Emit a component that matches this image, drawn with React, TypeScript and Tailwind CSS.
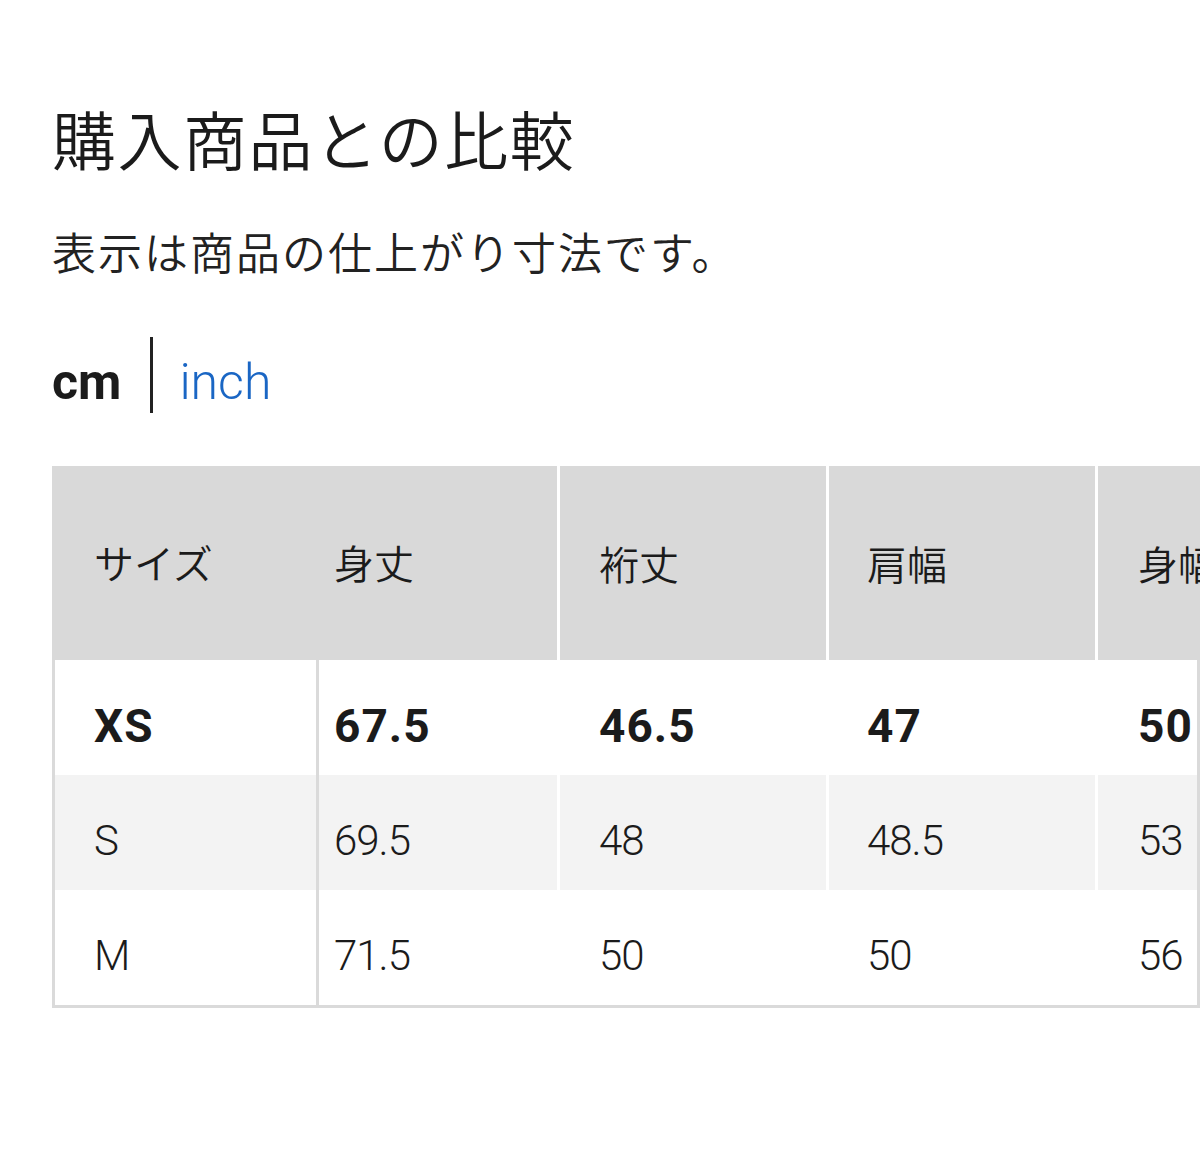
import React from "react";

const jp = { fontFamily: '"Noto Sans CJK JP", "Noto Sans", sans-serif' };
const num = { fontFamily: 'Roboto, "Noto Sans CJK JP", sans-serif' };

type Row = { size: string; vals: string[]; bold?: boolean; shaded?: boolean };

const rows: Row[] = [
  { size: "XS", vals: ["67.5", "46.5", "47", "50"], bold: true },
  { size: "S", vals: ["69.5", "48", "48.5", "53"], shaded: true },
  { size: "M", vals: ["71.5", "50", "50", "56"] },
];

function DataRow({ r }: { r: Row }) {
  const bg = r.shaded ? "bg-[#f3f3f3]" : "bg-white";
  const txt = r.bold
    ? "text-[46px] font-bold tracking-[1px]"
    : "text-[42px] font-light tracking-[-1px]";
  return (
    <div className="flex h-[115px] gap-[3px] bg-white">
      <div className={`flex w-[264px] shrink-0 items-center border-r-[3px] border-[#dadada] pl-[39px] pt-[16px] ${bg}`}>
        <span className={`leading-none text-[#1b1b1b] ${txt}`} style={num}>{r.size}</span>
      </div>
      <div className={`-ml-[3px] flex w-[238px] shrink-0 items-center pl-[15px] pt-[16px] ${bg}`}>
        <span className={`leading-none text-[#1b1b1b] ${txt}`} style={num}>{r.vals[0]}</span>
      </div>
      <div className={`flex w-[266px] shrink-0 items-center pl-[39px] pt-[16px] ${bg}`}>
        <span className={`leading-none text-[#1b1b1b] ${txt}`} style={num}>{r.vals[1]}</span>
      </div>
      <div className={`flex w-[266px] shrink-0 items-center pl-[38px] pt-[16px] ${bg}`}>
        <span className={`leading-none text-[#1b1b1b] ${txt}`} style={num}>{r.vals[2]}</span>
      </div>
      <div className={`flex min-w-0 flex-1 items-center pl-[40px] pt-[16px] ${bg}`}>
        <span className={`leading-none text-[#1b1b1b] ${txt}`} style={num}>{r.vals[3]}</span>
      </div>
    </div>
  );
}

export default function App() {
  return (
    <div className="h-[1168px] w-[1200px] overflow-hidden bg-white">
      <div className="pl-[52px] pt-[105px]">
        <h1 className="whitespace-nowrap text-[64px] font-[350] leading-[64px] tracking-[1.5px] text-[#1b1b1b]" style={jp}>
          購入商品との比較
        </h1>
        <p className="mt-[60px] whitespace-nowrap text-[44px] font-[350] leading-[44px] tracking-[2px] text-[#222222]" style={jp}>
          表示は商品の仕上がり寸法です。
        </p>
        <div className="mt-[64px] flex h-[76px] items-end">
          <span className="mb-[6px] text-[50px] font-bold leading-none text-[#1b1b1b]" style={num}>cm</span>
          <span className="ml-[29px] h-[76px] w-[3px] bg-[#222222]" />
          <span className="mb-[6px] ml-[26px] text-[50px] font-light leading-none text-[#1a66c4]" style={num}>inch</span>
        </div>
      </div>

      <div className="ml-[52px] mt-[53px]">
        <div className="flex h-[194px] gap-[3px] bg-white">
          <div className="flex w-[505px] shrink-0 items-center bg-[#d9d9d9]">
            <div className="w-[267px] shrink-0 pl-[42px]">
              <span className="text-[40px] font-[350] leading-none text-[#1b1b1b]" style={jp}>サイズ</span>
            </div>
            <div className="pl-[15px]">
              <span className="text-[40px] font-[350] leading-none text-[#1b1b1b]" style={jp}>身丈</span>
            </div>
          </div>
          <div className="flex w-[266px] shrink-0 items-center bg-[#d9d9d9] pl-[39px]">
            <span className="text-[40px] font-[350] leading-none text-[#1b1b1b]" style={jp}>裄丈</span>
          </div>
          <div className="flex w-[266px] shrink-0 items-center bg-[#d9d9d9] pl-[38px]">
            <span className="text-[40px] font-[350] leading-none text-[#1b1b1b]" style={jp}>肩幅</span>
          </div>
          <div className="flex min-w-0 flex-1 items-center overflow-hidden whitespace-nowrap bg-[#d9d9d9] pl-[40px]">
            <span className="text-[40px] font-[350] leading-none text-[#1b1b1b]" style={jp}>身幅</span>
          </div>
        </div>
        <div className="border-x-[3px] border-b-[3px] border-[#dadada]">
          {rows.map((r) => (
            <DataRow key={r.size} r={r} />
          ))}
        </div>
      </div>
    </div>
  );
}
